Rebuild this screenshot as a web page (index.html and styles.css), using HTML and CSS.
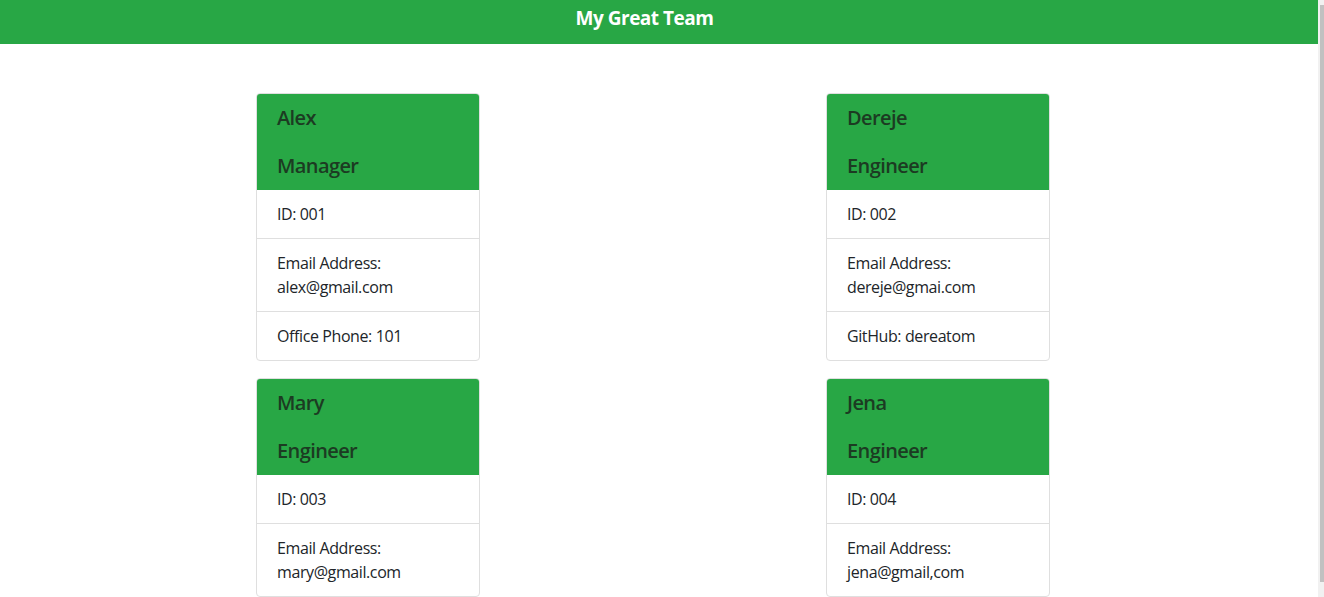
FILE: index.html
```html
<!DOCTYPE html>
<html lang="en">
<head>
<meta charset="utf-8">
<title>My Great Team</title>
<link rel="stylesheet" href="styles.css">
</head>
<body>
<header class="topbar">
  <h1 class="topbar-title">My Great Team</h1>
</header>
<main class="team">
  <div class="team-grid">
    <div class="card">
      <div class="card-header">
        <h5 class="card-name">Alex</h5>
        <h5 class="card-role">Manager</h5>
      </div>
      <ul class="card-list">
        <li>ID: 001</li>
        <li>Email Address:<br>alex@gmail.com</li>
        <li>Office Phone: 101</li>
      </ul>
    </div>
    <div class="card">
      <div class="card-header">
        <h5 class="card-name">Dereje</h5>
        <h5 class="card-role">Engineer</h5>
      </div>
      <ul class="card-list">
        <li>ID: 002</li>
        <li>Email Address:<br>dereje@gmai.com</li>
        <li>GitHub: dereatom</li>
      </ul>
    </div>
    <div class="card">
      <div class="card-header">
        <h5 class="card-name">Mary</h5>
        <h5 class="card-role">Engineer</h5>
      </div>
      <ul class="card-list">
        <li>ID: 003</li>
        <li>Email Address:<br>mary@gmail.com</li>
      </ul>
    </div>
    <div class="card">
      <div class="card-header">
        <h5 class="card-name">Jena</h5>
        <h5 class="card-role">Engineer</h5>
      </div>
      <ul class="card-list">
        <li>ID: 004</li>
        <li>Email Address:<br>jena@gmail,com</li>
      </ul>
    </div>
  </div>
</main>
<div class="scrollbar" aria-hidden="true"><div class="scrollbar-thumb"></div></div>
</body>
</html>
```
FILE: styles.css
```css
body {
  margin: 0 6px 0 0;
  font-family: "Open Sans", "Noto Sans", sans-serif;
  font-size: 16px;
  line-height: 1.5;
  letter-spacing: -0.4px;
  color: #212529;
  background: #fff;
}
.topbar {
  background: #28a745;
  height: 44px;
  box-sizing: border-box;
  padding: 4px 0 0 0;
  display: flex;
  justify-content: center;
}
.topbar-title {
  margin: 0 0 0 -29px;
  font-size: 19px;
  font-weight: 700;
  line-height: 28px;
  letter-spacing: -0.5px;
  color: #fff;
}
.team {
  padding: 49px 0 0 256px;
}
.team-grid {
  display: grid;
  grid-template-columns: 224px 224px;
  column-gap: 346px;
  row-gap: 17px;
}
.card {
  border: 1px solid #dfdfdf;
  border-radius: 4px;
  overflow: hidden;
  background: #fff;
}
.card-header {
  background: #28a745;
  padding: 12px 20px;
}
.card-name,
.card-role {
  margin: 0;
  font-size: 20px;
  font-weight: 600;
  line-height: 24px;
  letter-spacing: -0.6px;
  color: #1c3b22;
}
.card-name {
  margin-bottom: 24px;
}
.card-list {
  list-style: none;
  margin: 0;
  padding: 0;
}
.card-list li {
  padding: 12px 20px;
  border-top: 1px solid #dfdfdf;
}
.card-list li:first-child {
  border-top: none;
}
.scrollbar {
  position: fixed;
  top: 0;
  right: 0;
  bottom: 0;
  width: 6px;
  background: #f1f1f1;
}
.scrollbar-thumb {
  margin: 5px 0 0 2px;
  height: 577px;
  background: #c1c1c1;
}
```
